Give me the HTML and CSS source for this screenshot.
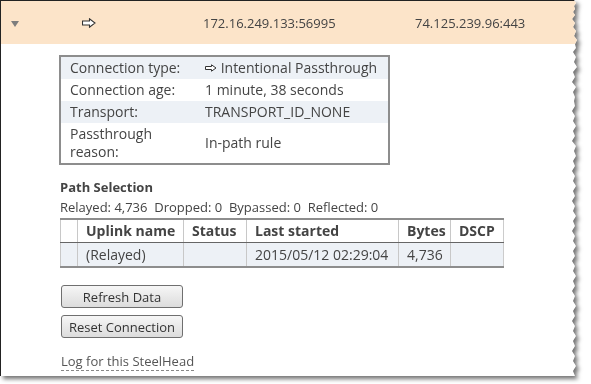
FILE: index.html
```html
<!DOCTYPE html>
<html>
<head>
<meta charset="utf-8">
<link rel="stylesheet" href="styles.css">
</head>
<body>
<div class="sheet">
  <div class="page">
    <div class="conn-row">
      <div class="cell toggle"><span class="tri"></span></div>
      <div class="cell"><svg class="arrow-lg" width="14" height="10" viewBox="0 0 14 10"><path d="M0.5 3 H7.5 V0.8 L13 5 L7.5 9.2 V7 H0.5 Z" fill="#fff" stroke="#333" stroke-width="1.1" stroke-linejoin="miter"/></svg></div>
      <div class="cell">172.16.249.133:56995</div>
      <div class="cell">74.125.239.96:443</div>
    </div>
    <div class="content">
      <table class="details">
        <tr class="alt"><td class="lbl">Connection type:</td><td><svg class="arrow-sm" width="12" height="8" viewBox="0 0 12 8"><path d="M0.5 2.5 H6.5 V0.8 L11 4 L6.5 7.2 V5.5 H0.5 Z" fill="#fff" stroke="#333" stroke-width="1"/></svg> Intentional Passthrough</td></tr>
        <tr><td class="lbl">Connection age:</td><td>1 minute, 38 seconds</td></tr>
        <tr class="alt"><td class="lbl">Transport:</td><td>TRANSPORT_ID_NONE</td></tr>
        <tr class="tall"><td class="lbl">Passthrough<br>reason:</td><td>In-path rule</td></tr>
      </table>
      <h3 class="section">Path Selection</h3>
      <div class="stats">Relayed: 4,736&nbsp; Dropped: 0&nbsp; Bypassed: 0&nbsp; Reflected: 0</div>
      <table class="paths">
        <thead>
          <tr><th class="c0"></th><th class="c1">Uplink name</th><th class="c2">Status</th><th class="c3">Last started</th><th class="c4">Bytes</th><th class="c5">DSCP</th></tr>
        </thead>
        <tbody>
          <tr><td></td><td>(Relayed)</td><td></td><td>2015/05/12 02:29:04</td><td>4,736</td><td></td></tr>
        </tbody>
      </table>
      <div class="buttons">
        <button class="btn">Refresh Data</button>
        <button class="btn">Reset Connection</button>
      </div>
      <a class="log" href="#">Log for this SteelHead</a>
    </div>
  </div>
</div>
</body>
</html>
```
FILE: styles.css
```css
html, body {
  margin: 0;
  padding: 0;
  background: #fff;
}
body {
  font-family: "Open Sans", "Noto Sans", sans-serif;
  color: #444;
  width: 591px;
  height: 384px;
  overflow: hidden;
}
.sheet {
  width: 578px;
  height: 376px;
  filter: drop-shadow(3px 3px 2px rgba(0,0,0,0.55));
}
.page {
  width: 578px;
  height: 376px;
  background: #fff;
  box-sizing: border-box;
  border-left: 1px solid #222;
  border-top: 1px solid #222;
  clip-path: polygon(0 0, 574px 0, 576px 3px, 574px 6px, 575px 9px, 573px 12px, 575px 15px, 572px 19px, 575px 23px, 573px 27px, 576px 31px, 574px 36px, 577px 40px, 575px 44px, 576px 48px, 573px 52px, 576px 57px, 574px 62px, 577px 67px, 573px 72px, 575px 77px, 572px 82px, 576px 87px, 573px 92px, 575px 97px, 574px 101px, 575px 106px, 572px 111px, 575px 116px, 573px 121px, 576px 126px, 573px 131px, 575px 136px, 572px 141px, 576px 146px, 574px 151px, 576px 156px, 573px 161px, 575px 166px, 572px 171px, 575px 176px, 573px 181px, 576px 186px, 573px 191px, 575px 196px, 572px 201px, 575px 206px, 573px 211px, 576px 216px, 573px 221px, 575px 226px, 572px 231px, 575px 236px, 573px 241px, 576px 246px, 573px 251px, 575px 256px, 572px 261px, 575px 266px, 573px 271px, 576px 276px, 573px 281px, 575px 286px, 572px 291px, 575px 296px, 573px 301px, 576px 306px, 573px 311px, 575px 316px, 572px 321px, 575px 326px, 573px 331px, 576px 336px, 573px 341px, 575px 346px, 572px 351px, 575px 356px, 573px 361px, 576px 366px, 573px 371px, 575px 376px, 0 376px);
}
.conn-row {
  display: grid;
  grid-template-columns: 81px 121px 212px 1fr;
  align-items: center;
  height: 43px;
  background: #fce4c9;
  font-size: 13px;
  color: #444;
}
.cell {
  display: flex;
  align-items: center;
}
.toggle {
  padding-left: 10px;
}
.tri {
  width: 0;
  height: 0;
  border-left: 4px solid transparent;
  border-right: 4px solid transparent;
  border-top: 6px solid #7d7d7d;
  margin-top: 2px;
}
.arrow-lg {
  margin-top: 1px;
}
.content {
  padding-left: 58px;
  padding-top: 11px;
}
.details {
  border-collapse: collapse;
  border: 2px solid #8d8d8d;
  width: 331px;
  font-size: 14px;
  color: #444;
}
.details td {
  padding: 0 0 0 9px;
  height: 22px;
  line-height: 18px;
  vertical-align: middle;
}
.details td.lbl {
  width: 126px;
}
.details tr.alt td {
  background: #edf1f6;
}
.details tr.tall td {
  height: 40px;
}
.arrow-sm {
  vertical-align: 1px;
}
.section {
  font-size: 13px;
  font-weight: bold;
  margin: 13px 0 0 1px;
  color: #444;
  line-height: 18px;
}
.stats {
  font-size: 13px;
  margin: 2px 0 0 1px;
  line-height: 18px;
}
.paths {
  margin-top: 2px;
  margin-left: 1px;
  border-collapse: collapse;
  width: 444px;
  font-size: 14px;
  border-top: 2px solid #8d8d8d;
  border-bottom: 2px solid #8d8d8d;
  border-left: 1px solid #bbb;
  border-right: 1px solid #ccc;
}
.paths th {
  text-align: left;
  font-weight: bold;
  height: 22px;
  padding: 0 0 0 8px;
  border-left: 1px solid #c8c8c8;
  border-bottom: 1px solid #666;
  color: #444;
  line-height: 18px;
}
.paths td {
  height: 23px;
  padding: 0 0 0 8px;
  background: #edf1f6;
  border-left: 1px solid #c8c8c8;
  line-height: 18px;
}
.paths .c0 { width: 8px; }
.paths .c1 { width: 97px; }
.paths .c2 { width: 54px; }
.paths .c3 { width: 143px; }
.paths .c4 { width: 43px; }
.buttons {
  display: flex;
  flex-direction: column;
  align-items: flex-start;
  gap: 7px;
  margin: 17px 0 0 2px;
}
.btn {
  width: 122px;
  height: 23px;
  font-family: "Open Sans", "Noto Sans", sans-serif;
  font-size: 13px;
  color: #333;
  border: 1px solid #6f6f6f;
  border-radius: 3px;
  background: linear-gradient(#f6f6f6, #dcdcdc);
  padding: 0;
  line-height: 20px;
}
.log {
  display: inline-block;
  margin: 15px 0 0 2px;
  font-size: 13px;
  color: #555;
  text-decoration: none;
  border-bottom: 1px dashed #888;
  line-height: 17px;
}
```
